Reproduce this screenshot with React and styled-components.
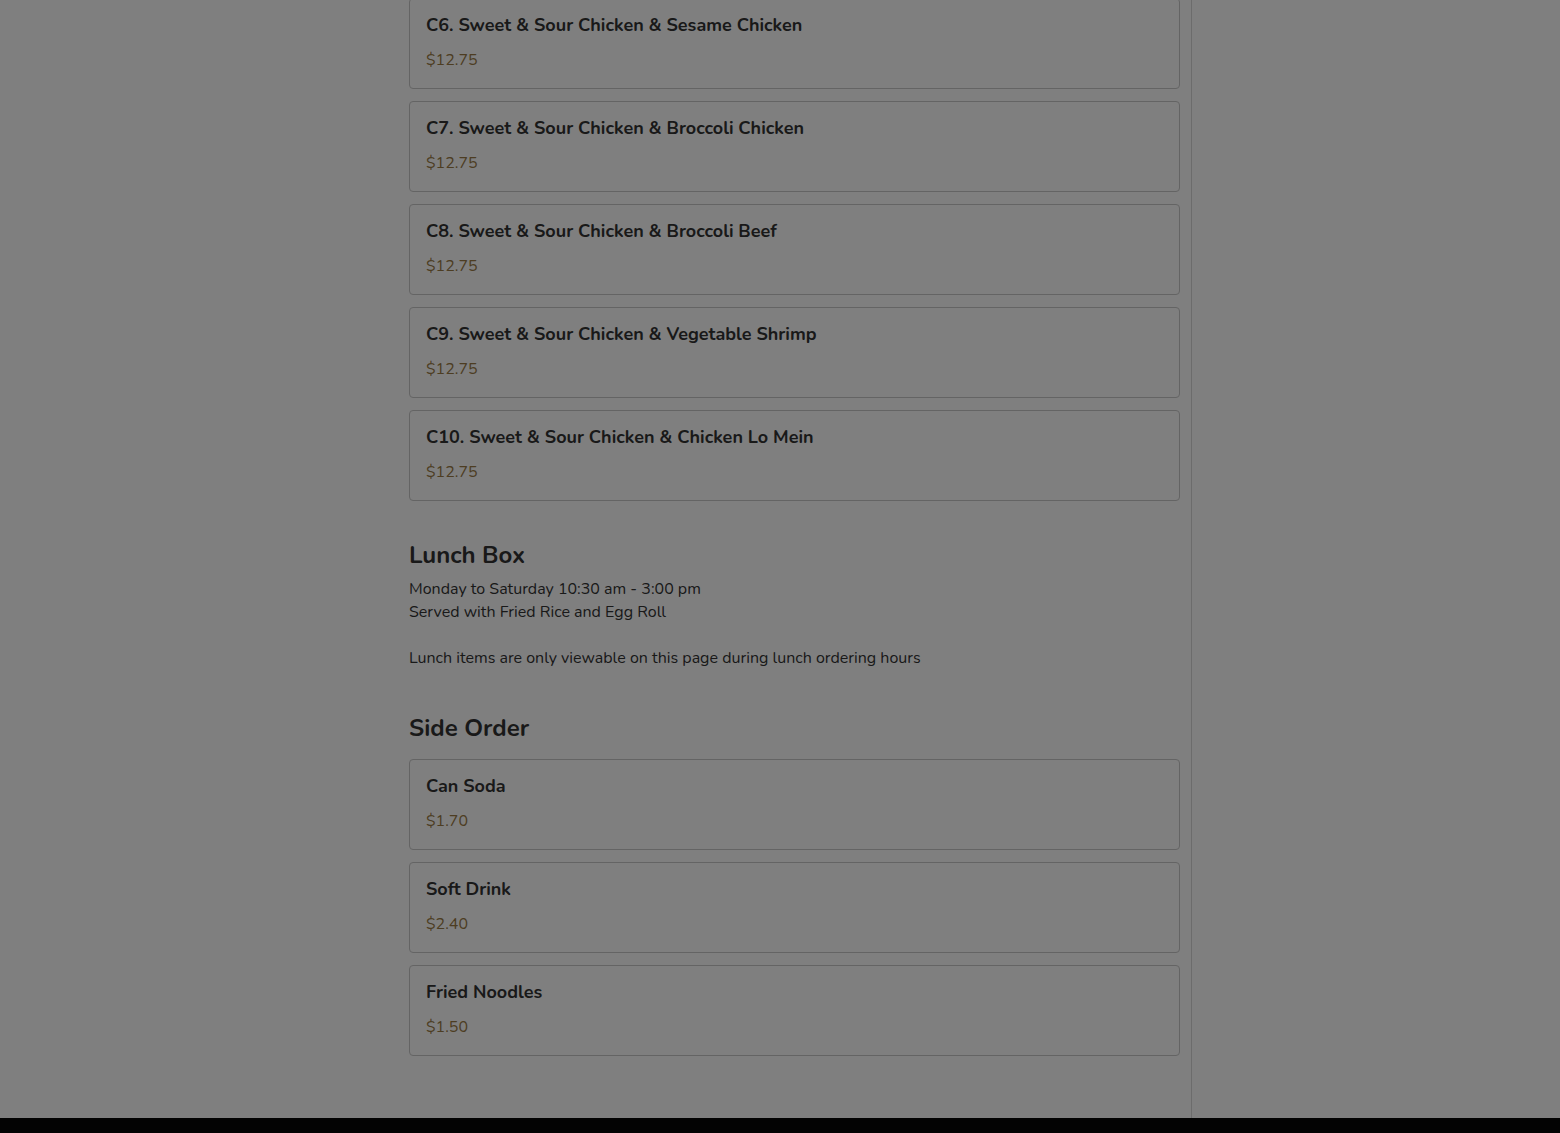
import React from "react";
import styled, { createGlobalStyle } from "styled-components";

const GlobalStyle = createGlobalStyle`
  html, body {
    margin: 0;
    padding: 0;
    background: #ffffff;
    font-family: "Nunito", "Lato", "Open Sans", sans-serif;
    color: #333333;
  }
`;

const Page = styled.div`
  display: flex;
  flex-direction: column;
  min-height: 1133px;
  overflow: hidden;
`;

const Body = styled.div`
  display: flex;
  flex: 1;
`;

const Main = styled.main`
  width: 771px;
  margin-left: 409px;
  margin-right: 11px;
  margin-top: -2px;
  padding-bottom: 60px;
`;

const Sidebar = styled.aside`
  flex: 1;
  border-left: 1px solid #d8d8d8;
`;

const CardList = styled.div`
  display: flex;
  flex-direction: column;
  gap: 12px;
`;

const Card = styled.div`
  border: 1px solid #c8c8c8;
  border-radius: 4px;
  padding: 15px 16px 17px;
  background: #ffffff;
`;

const ItemName = styled.h4`
  margin: 0;
  font-size: 18px;
  line-height: 22px;
  font-weight: 700;
  color: #333333;
`;

const ItemPrice = styled.div`
  margin-top: 13px;
  font-size: 16px;
  line-height: 22px;
  color: #9a7b45;
`;

const Section = styled.section`
  margin-top: ${({ $top }) => $top}px;
`;

const SectionTitle = styled.h2`
  margin: 0 0 ${({ $gap }) => $gap}px;
  font-size: 24px;
  line-height: 32px;
  font-weight: 700;
  color: #333333;
`;

const Note = styled.p`
  margin: 0;
  font-size: 16px;
  line-height: 23px;
  color: #333333;
  white-space: pre-line;
`;

const Footer = styled.footer`
  height: 15px;
  background: #060606;
`;

const Overlay = styled.div`
  position: fixed;
  inset: 0;
  background: rgba(0, 0, 0, 0.5);
  pointer-events: none;
`;

const combos = [
  "C6. Sweet & Sour Chicken & Sesame Chicken",
  "C7. Sweet & Sour Chicken & Broccoli Chicken",
  "C8. Sweet & Sour Chicken & Broccoli Beef",
  "C9. Sweet & Sour Chicken & Vegetable Shrimp",
  "C10. Sweet & Sour Chicken & Chicken Lo Mein",
].map((name) => ({ name, price: "$12.75" }));

const sides = [
  { name: "Can Soda", price: "$1.70" },
  { name: "Soft Drink", price: "$2.40" },
  { name: "Fried Noodles", price: "$1.50" },
];

function MenuItems({ items }) {
  return (
    <CardList>
      {items.map((item) => (
        <Card key={item.name}>
          <ItemName>{item.name}</ItemName>
          <ItemPrice>{item.price}</ItemPrice>
        </Card>
      ))}
    </CardList>
  );
}

export default function App() {
  return (
    <>
      <GlobalStyle />
      <Page>
        <Body>
          <Main>
            <MenuItems items={combos} />

            <Section $top={38}>
              <SectionTitle $gap={7}>Lunch Box</SectionTitle>
              <Note>
                {"Monday to Saturday 10:30 am - 3:00 pm\nServed with Fried Rice and Egg Roll\n\nLunch items are only viewable on this page during lunch ordering hours"}
              </Note>
            </Section>

            <Section $top={42}>
              <SectionTitle $gap={15}>Side Order</SectionTitle>
              <MenuItems items={sides} />
            </Section>
          </Main>
          <Sidebar />
        </Body>
        <Footer />
      </Page>
      <Overlay />
    </>
  );
}
